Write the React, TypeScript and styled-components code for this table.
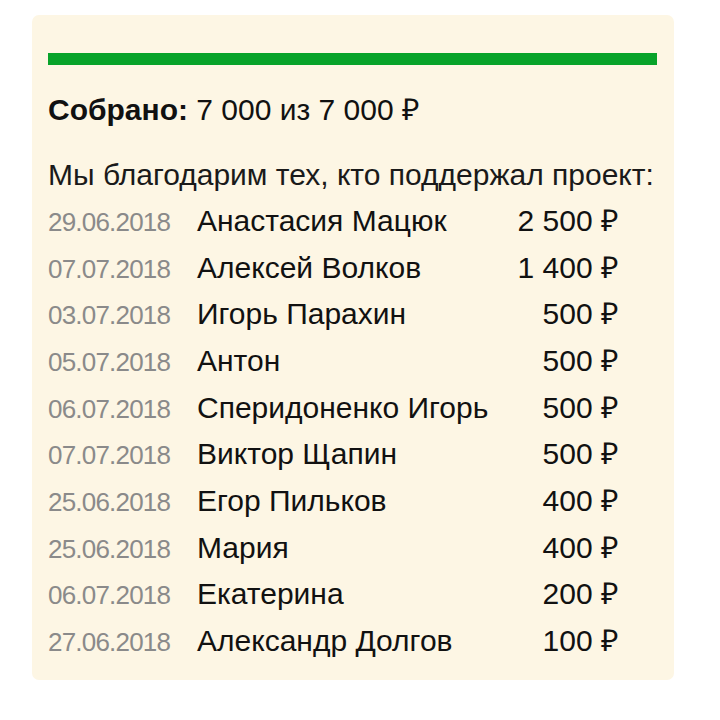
import styled, { createGlobalStyle } from "styled-components";

const GlobalStyle = createGlobalStyle`
  body {
    margin: 0;
    background: #ffffff;
    font-family: "Liberation Sans", Arial, sans-serif;
  }
`;

const Page = styled.div`
  width: 720px;
  height: 720px;
  padding: 15px 46px 0 32px;
  box-sizing: border-box;
`;

const Card = styled.div`
  background: #fdf6e4;
  border-radius: 7px;
  padding: 38px 17px 22px 16px;
  height: 665px;
  box-sizing: border-box;
`;

const Progress = styled.div`
  height: 12px;
  background: #08a32a;
`;

const Total = styled.p`
  margin: 29px 0 0;
  font-size: 30px;
  color: #111;
  line-height: 32px;
`;

const Label = styled.b`
  font-weight: 700;
`;

const Thanks = styled.p`
  margin: 33px 0 0;
  font-size: 30px;
  color: #1a1a1a;
  line-height: 32px;
`;

const List = styled.div`
  display: grid;
  grid-template-columns: 149px 1fr auto;
  grid-auto-rows: 46.67px;
  align-items: baseline;
  line-height: 46.67px;
  margin-top: 7px;
  padding-right: 39px;
`;

const Date = styled.span`
  font-size: 26px;
  letter-spacing: -0.8px;
  color: #8a8a8a;
`;

const Name = styled.span`
  font-size: 30px;
  color: #111;
`;

const Amount = styled.span`
  font-size: 30px;
  color: #111;
  text-align: right;
`;

const donors = [
  ["29.06.2018", "Анастасия Мацюк", "2 500 ₽"],
  ["07.07.2018", "Алексей Волков", "1 400 ₽"],
  ["03.07.2018", "Игорь Парахин", "500 ₽"],
  ["05.07.2018", "Антон", "500 ₽"],
  ["06.07.2018", "Сперидоненко Игорь", "500 ₽"],
  ["07.07.2018", "Виктор Щапин", "500 ₽"],
  ["25.06.2018", "Егор Пильков", "400 ₽"],
  ["25.06.2018", "Мария", "400 ₽"],
  ["06.07.2018", "Екатерина", "200 ₽"],
  ["27.06.2018", "Александр Долгов", "100 ₽"],
];

const App = () => {
  return (
    <Page>
      <GlobalStyle />
      <Card>
        <Progress />
        <Total>
          <Label>Собрано:</Label> 7 000 из 7 000 ₽
        </Total>
        <Thanks>Мы благодарим тех, кто поддержал проект:</Thanks>
        <List>
          {donors.map(([date, name, sum], i) => (
            <>
              <Date key={`d${i}`}>{date}</Date>
              <Name key={`n${i}`}>{name}</Name>
              <Amount key={`a${i}`}>{sum}</Amount>
            </>
          ))}
        </List>
      </Card>
    </Page>
  );
};

export default App;
